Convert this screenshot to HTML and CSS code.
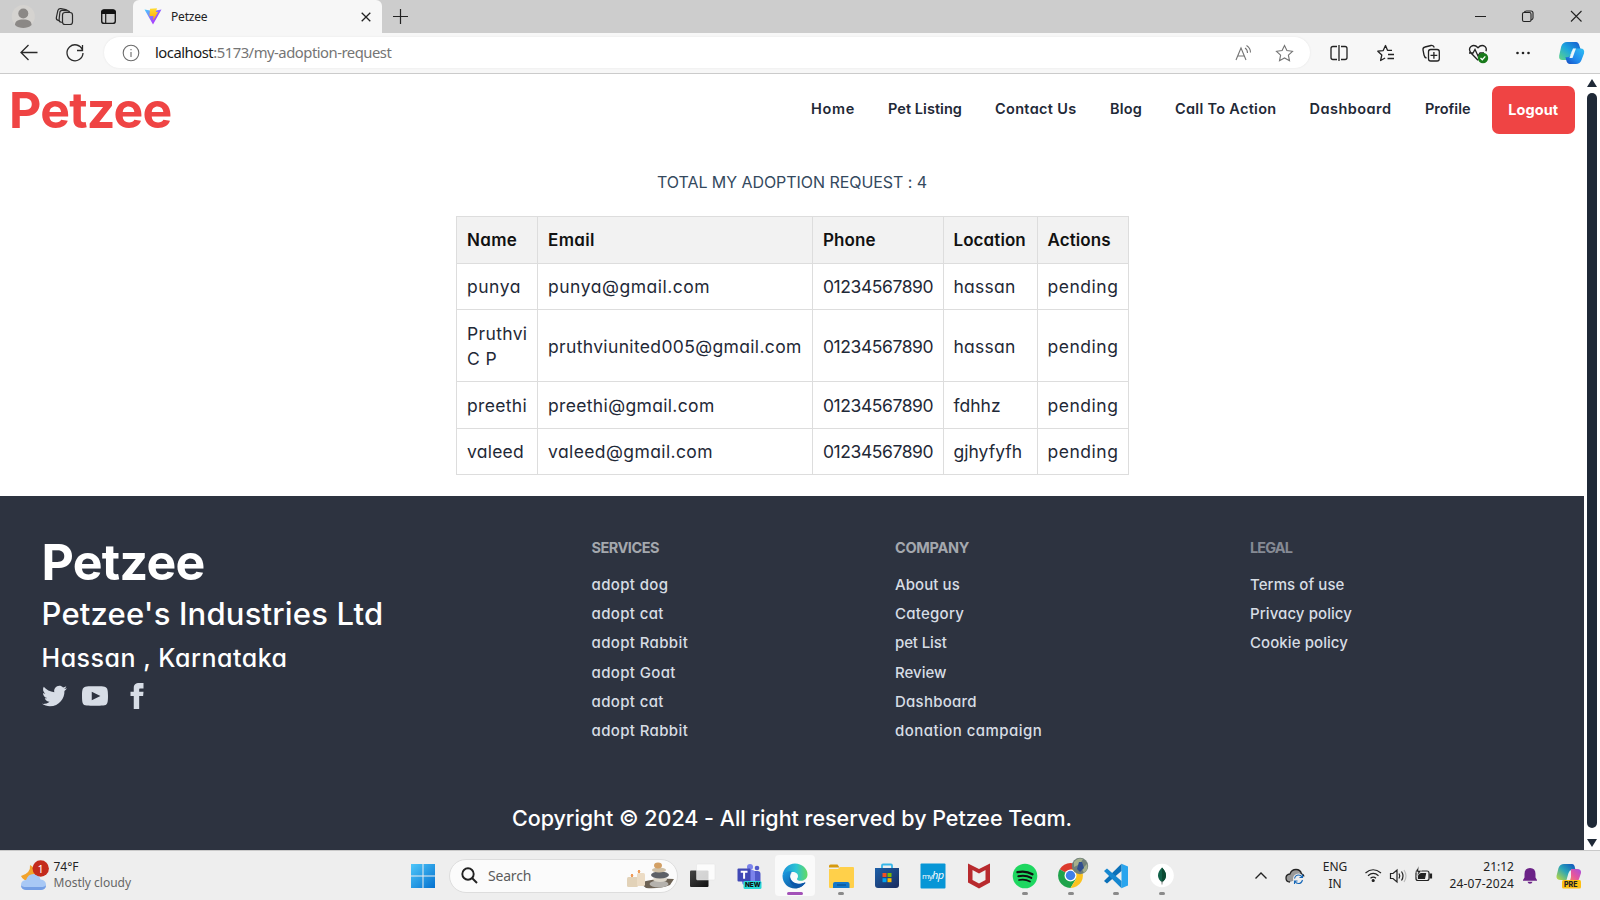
FILE: index.html
```html
<!DOCTYPE html>
<html lang="en">
<head>
<meta charset="utf-8">
<title>Petzee</title>
<link rel="stylesheet" href="styles.css">
</head>
<body>
<div class="tabbar">
  <svg class="tab-tools" width="133" height="33" viewBox="0 0 133 33" fill="none">
    <circle cx="23.300" cy="16.500" r="11.500" fill="#d5d3d0"/><circle cx="23.300" cy="13.500" r="5" fill="#8b8886"/><path d="M15 25c0-4 3-5.600 8.300-5.600s8.300 1.600 8.300 5.600c-2.500 2.200-5 3-8.300 3s-6-.8-8.300-3z" fill="#8b8886"/>
    <g stroke="#2b2b2b" stroke-width="1.200" fill="#cdcdcd"><rect x="57" y="9" width="10" height="12" rx="2.500" transform="rotate(12 62 15)"/><rect x="59.500" y="10.500" width="10" height="12" rx="2.500" transform="rotate(6 64 16)"/><rect x="62.500" y="12.500" width="10" height="12" rx="2.500"/></g>
    <rect x="101.700" y="10" width="13.600" height="13.400" rx="2.500" stroke="#1b1b1b" stroke-width="1.400"/><path d="M101.700 13.500V12q0-2 2-2h9.600q2 0 2 2v1.500z" fill="#111" stroke="#111"/><path d="M105.700 14v9" stroke="#1b1b1b" stroke-width="1.200"/>
  </svg>
  <div class="tab">
    <svg width="18" height="17" viewBox="0 0 18 17"><defs><linearGradient id="vt" x1="0" y1="0" x2="1" y2="1"><stop offset="0" stop-color="#41d1ff"/><stop offset=".6" stop-color="#a04dff"/><stop offset="1" stop-color="#bd34fe"/></linearGradient><linearGradient id="vy" x1="0" y1="0" x2="0" y2="1"><stop offset="0" stop-color="#ffdd35"/><stop offset="1" stop-color="#ffa800"/></linearGradient></defs><path d="M.5 1.500 9 16.500 17.500 1.500 9 3z" fill="url(#vt)"/><path d="M6 .8 13 .2 11.800 4h2.200L9.200 12.500l.3-4.500H5.500z" fill="url(#vy)"/></svg>
    <span class="tab-title">Petzee</span>
    <svg width="10" height="10" viewBox="0 0 10 10" stroke="#222" stroke-width="1.300"><path d="m.7.700 8.600 8.600M9.300.7.700 9.300"/></svg>
  </div>
  <svg class="newtab" width="15" height="15" viewBox="0 0 15 15" stroke="#222" stroke-width="1.200"><path d="M7.500 0v15M0 7.500h15"/></svg>
  <svg class="winbtns" width="110" height="13" viewBox="0 0 110 13" fill="none" stroke="#222" stroke-width="1.100"><path d="M0 6.500h11M96 1l10.500 10.500M106.500 1 96 11.500"/><rect x="47.500" y="2.500" width="8.500" height="9" rx="1.500"/><path d="M49.500 2.500q0-1.500 2-1.500h4.500q2 0 2 2v5q0 1.500-2 2"/></svg>
</div>
<div class="toolbar">
  <svg class="navbtns" width="104" height="40" viewBox="0 0 104 40" fill="none" stroke="#2a2a2a" stroke-width="1.300"><path d="M37.500 19.500H21.500M28.500 12l-7.500 7.500 7.500 7.500"/><path d="M82.500 17a8 8 0 1 0 .5 3M82.500 12v5.500H77"/></svg>
  <div class="address">
    <svg width="18" height="18" viewBox="0 0 18 18" fill="none" stroke="#6b6b6b" stroke-width="1.100"><circle cx="9" cy="9" r="7.800"/><path d="M9 8v5M9 5v1.300"/></svg>
    <span class="url"><b class="host">localhost</b>:5173/my-adoption-request</span>
    <svg width="60" height="20" viewBox="0 0 60 20" fill="none" stroke="#747474" stroke-width="1.100"><path d="m2 17 5-12 5 12M3.800 13h6.400M11 5q2.500 1.500 2.500 5M12.500 2.500q4 2.500 4 7"/><path d="m50.500 2.500 2.400 5.100 5.600.7-4.100 3.900 1.100 5.600-5-2.800-5 2.800 1.100-5.600-4.100-3.900 5.600-.7z"/></svg>
  </div>
  <svg width="290" height="40" viewBox="1310 33 290 40" fill="none" stroke="#222" stroke-width="1.300">
    <path d="M1337 46.500h-4q-2 0-2 2v9q0 2 2 2h4M1341 46.500h4q2 0 2 2v9q0 2-2 2h-4M1339 45v16"/>
    <path d="m1392 50.300h-4.500l-2-4.800-2.300 5.100-5.400.6 4 3.800-1.200 5.500 4.500-2.500M1388 54.500h6M1387.500 58.500h6.500" stroke-linejoin="round"/>
    <path d="M1426.500 58q-2-.5-2.500-3l-1-5q-.3-2.500 2-3l6-1.500q2.500-.5 3.300 2"/><rect x="1428.500" y="49.500" width="10.800" height="11.500" rx="2.200"/><path d="M1433.900 52v6.800M1430.500 55.400h6.800"/>
    <path d="m1478 60.300-7-7.300q-3-4 0-6.500 3.500-2.500 7 1.200 3.500-3.700 7-1.200 2 1.800 1 4.800M1469 53h4l2-3.500 3 6.500 2-3h4"/><circle cx="1483" cy="58" r="5.200" fill="#197a1b" stroke="none"/><path d="m1480.500 58 1.800 1.800 3-3.400" stroke="#fff"/>
    <g fill="#222" stroke="none"><circle cx="1517.500" cy="53" r="1.300"/><circle cx="1523" cy="53" r="1.300"/><circle cx="1528.500" cy="53" r="1.300"/></g>
    <g stroke="none"><path d="M1567 42h9q2.500 0 3.500 4l1 3h-5q-3 0-4 3l-3 8h-6q-4 0-3.300-4.500l2-9q1.500-4.500 5.800-4.500z" fill="url(#cpa)"/><path d="M1576 64h-6q-3 0-3.800-4l-.7-3q4 1 5.500-3l2-5.500h7.500q4.500 0 3.500 5l-2.500 6.500q-1.500 4-5.500 4z" fill="url(#cpb)"/><path d="M1573 48.500h3l-3.500 9.500h-3z" fill="#e9f7fb"/></g>
    <defs><linearGradient id="cpa" x1="1" y1="0" x2="0" y2="1"><stop stop-color="#1657cf"/><stop offset=".5" stop-color="#1ca6df"/><stop offset="1" stop-color="#62d684"/></linearGradient><linearGradient id="cpb" x1="1" y1="0" x2="0" y2="1"><stop stop-color="#30c0f4"/><stop offset=".6" stop-color="#1f87ec"/><stop offset="1" stop-color="#1649bd"/></linearGradient></defs>
  </svg>
</div>
<div class="viewport">
  <div class="page">
    <header class="header">
      <div class="logo">Petzee</div>
      <nav class="nav"><span class="n-home">Home</span><span class="n-pets">Pet Listing</span><span class="n-contact">Contact Us</span><span class="n-blog">Blog</span><span class="n-cta">Call To Action</span><span class="n-dash">Dashboard</span><span>Profile</span></nav>
      <div class="logout">Logout</div>
    </header>
    <h1 class="title">TOTAL MY ADOPTION REQUEST : 4</h1>
    <table class="requests">
      <colgroup><col class="c-name"><col class="c-email"><col class="c-phone"><col class="c-loc"><col class="c-act"></colgroup>
      <thead><tr><th class="loose">Name</th><th class="loose">Email</th><th>Phone</th><th>Location</th><th>Actions</th></tr></thead>
      <tbody>
      <tr><td class="loosest">punya</td><td class="loosest">punya@gmail.com</td><td class="num">01234567890</td><td class="snug">hassan</td><td class="loosest">pending</td></tr>
      <tr class="tall"><td class="loose">Pruthvi<br>C P</td><td class="loose">pruthviunited005@gmail.com</td><td class="num">01234567890</td><td class="snug">hassan</td><td class="loosest">pending</td></tr>
      <tr><td class="loose">preethi</td><td class="loose">preethi@gmail.com</td><td class="num">01234567890</td><td>fdhhz</td><td class="loosest">pending</td></tr>
      <tr><td class="snug">valeed</td><td class="looser">valeed@gmail.com</td><td class="num">01234567890</td><td>gjhyfyfh</td><td class="loosest">pending</td></tr>
      </tbody>
    </table>
    <footer class="footer">
      <div class="columns">
        <div class="brand">
          <div class="brand-name">Petzee</div>
          <div class="brand-co">Petzee's Industries Ltd</div>
          <div class="brand-city">Hassan , Karnataka</div>
          <div class="social">
            <svg width="25" height="26" viewBox="0 0 24 24"><path d="M24 4.557c-.883.392-1.832.656-2.828.775 1.017-.609 1.798-1.574 2.165-2.724-.951.564-2.005.974-3.127 1.195-.897-.957-2.178-1.555-3.594-1.555-3.179 0-5.515 2.966-4.797 6.045-4.091-.205-7.719-2.165-10.148-5.144-1.290 2.213-.669 5.108 1.523 6.574-.806-.026-1.566-.247-2.229-.616-.054 2.281 1.581 4.415 3.949 4.890-.693.188-1.452.232-2.224.084.626 1.956 2.444 3.379 4.600 3.419-2.070 1.623-4.678 2.348-7.290 2.040 2.179 1.397 4.768 2.212 7.548 2.212 9.142 0 14.307-7.721 13.995-14.646.962-.695 1.797-1.562 2.457-2.549z"/></svg>
            <svg width="26" height="26" viewBox="0 0 24 24"><path d="M19.615 3.184c-3.604-.246-11.631-.245-15.230 0-3.897.266-4.356 2.620-4.385 8.816.029 6.185.484 8.549 4.385 8.816 3.600.245 11.626.246 15.230 0 3.897-.266 4.356-2.620 4.385-8.816-.029-6.185-.484-8.549-4.385-8.816zm-10.615 12.816v-8l8 3.993-8 4.007z"/></svg>
            <svg width="26" height="26" viewBox="0 0 24 24"><path d="M9 8h-3v4h3v12h5v-12h3.642l.358-4h-4v-1.667c0-.955.192-1.333 1.115-1.333h2.885v-5h-3.808c-3.596 0-5.192 1.583-5.192 4.615v3.385z"/></svg>
          </div>
        </div>
        <div class="links services"><h2>SERVICES</h2><a>adopt dog</a><a>adopt cat</a><a>adopt Rabbit</a><a>adopt Goat</a><a>adopt cat</a><a>adopt Rabbit</a></div>
        <div class="links company"><h2>COMPANY</h2><a>About us</a><a class="wide1">Category</a><a class="tight">pet List</a><a class="even">Review</a><a class="wide1">Dashboard</a><a class="wide2">donation campaign</a></div>
        <div class="links legal"><h2>LEGAL</h2><a>Terms of use</a><a>Privacy policy</a><a>Cookie policy</a></div>
      </div>
      <p class="copyright">Copyright © 2024 - All right reserved by Petzee Team.</p>
    </footer>
  </div>
  <div class="scrollbar"><i class="up"></i><i class="thumb"></i><i class="down"></i></div>
</div>
<div class="taskbar">
  <div class="weather">
    <svg width="32" height="34" viewBox="18 855 32 34"><path d="M30 861q1 8-9 11 2 5 9 5l6-5-3-9z" fill="#f2a32c"/><path d="M26 886q-5-.5-5-5 0-4.500 5-5 2-6 7.500-6 5.500 0 7 5.500 5.500.5 5.500 5.500 0 4.500-5 5z" fill="#a8c8f5"/><path d="M21 881q0 4.500 5 5h15q5-.5 5-5-1 2-5 2H26q-4 0-5-2z" fill="#749ee4"/><circle cx="40.700" cy="864.500" r="8.200" fill="#c42b1c"/></svg>
    <b class="badge">1</b>
    <div class="wtext"><span>74°F</span><span class="dim">Mostly cloudy</span></div>
  </div>
  <svg class="start" width="26" height="26" viewBox="0 0 26 26"><defs><linearGradient id="w" x1="0" y1="0" x2="1" y2="1"><stop stop-color="#4fc7fa"/><stop offset="1" stop-color="#0471cf"/></linearGradient></defs><path d="M1 1h11.500v11.500H1zM13.500 1H25v11.500H13.500zM1 13.500h11.500V25H1zM13.500 13.500H25V25H13.500z" fill="url(#w)"/></svg>
  <div class="search">
    <svg width="17" height="17" viewBox="0 0 17 17" fill="none" stroke="#222" stroke-width="1.900"><circle cx="7" cy="7" r="5.700"/><path d="m11 11 5 5"/></svg>
    <span class="stext">Search</span>
    <svg width="48" height="27" viewBox="626 863 48 27"><path d="M640 884q14-5 34-4l-4 6q-10 4-24 3z" fill="#6d6254"/><rect x="627" y="878" width="11" height="10" rx="1.500" fill="#e2d2b8"/><rect x="637" y="874" width="8" height="13" rx="1.500" fill="#ecdcc5"/><path d="M632 875q1.500 1.500 0 3-1.500-1.500 0-3zM639 871q1.500 1.500 0 3-1.500-1.500 0-3z" fill="#ef8b3b" stroke="#ef8b3b"/><ellipse cx="659" cy="885" rx="9.500" ry="3.500" fill="#b5b2ad"/><ellipse cx="660" cy="880.500" rx="7" ry="2.500" fill="#ddd7cb"/><ellipse cx="660" cy="876" rx="9" ry="3.500" fill="#5c6067"/><ellipse cx="659" cy="871" rx="7" ry="2.600" fill="#cfc0a7"/><ellipse cx="658" cy="866.500" rx="4" ry="3" fill="#d3a065"/></svg>
  </div>
  <div class="apps">
    <div class="app"><svg viewBox="0 0 26 26"><defs><linearGradient id="tv" x1="0" y1="0" x2="1" y2="1"><stop stop-color="#454545"/><stop offset="1" stop-color="#111"/></linearGradient></defs><rect x="0" y="7.500" width="18.500" height="16.500" rx="1" fill="url(#tv)"/><rect x="6.500" y="1" width="18.500" height="16" rx="1" fill="#fff" fill-opacity=".8" stroke="#e3e3e3" stroke-width=".5"/></svg></div>
    <div class="app teams"><svg viewBox="0 0 26 26"><circle cx="14" cy="4" r="3" fill="#7b83eb"/><circle cx="21" cy="5" r="2.300" fill="#5059c9"/><rect x="16" y="8" width="8.500" height="13" rx="3" fill="#5059c9"/><rect x="6" y="7" width="13" height="15" rx="3" fill="#7b83eb"/><rect x="1.500" y="5.500" width="13" height="13" rx="1" fill="#4048b5"/><path d="M4.700 8.800h6.800M8.100 8.800v7" stroke="#fff" stroke-width="2"/><rect x="7.500" y="18" width="18" height="8" rx="1.500" fill="#28d9d5"/></svg><b class="new">NEW</b></div>
    <div class="app active"><svg viewBox="0 0 26 26"><defs><linearGradient id="e1" x1="0" y1=".3" x2="1" y2=".3"><stop stop-color="#1c91da"/><stop offset=".55" stop-color="#2cc3d4"/><stop offset="1" stop-color="#63db62"/></linearGradient><linearGradient id="e2" x1="0" y1="0" x2="1" y2="1"><stop stop-color="#1b9de2"/><stop offset="1" stop-color="#0b4591"/></linearGradient></defs><path d="M.5 13C1 5.500 6.500.5 13 .5c7 0 12.500 5 12.500 11 0 4-3.200 6.300-6.800 6.300-2.400 0-3.700-.8-3.700-1.800 0-.7 1-1.200 1-3 0-2-2-4-5.500-4-5 0-8.500 1.500-10 4z" fill="url(#e1)"/><path d="M.5 13C2 8.500 6 7.500 10 8.500c-2.500 2-3 8 2 11 4 2.300 8.500 1.300 11.500-.5C21.500 23 17.500 25.500 13 25.500 6 25.500.5 20 .5 13z" fill="url(#e2)"/><path d="M10 9q-3.500 3-1.500 7.500c2 4 8 5.500 13 3.500q1.500-.7 2 0-2.500 3-5.500 4.200C10 25 4 17 10 9z" fill="#0d57a8"/></svg><i class="ind on"></i></div>
    <div class="app"><svg viewBox="0 0 26 26"><path d="M1 3q0-1.500 1.500-1.500h7l2 3H1z" fill="#d69a0f"/><path d="M1 6h9l2-2h13q1 0 1 1v19q0 1-1 1H2q-1 0-1-1z" fill="#ffd04a"/><path d="M5 25v-4q0-2 2-2h12.500q2 0 2 2v4z" fill="#1377c9"/><path d="M9 22h9" stroke="#0d5798" stroke-width="1.500"/></svg><i class="ind"></i></div>
    <div class="app"><svg viewBox="0 0 26 26"><defs><linearGradient id="st" x1="0" y1="0" x2="1" y2="1"><stop stop-color="#1c5fa8"/><stop offset="1" stop-color="#1b2b5d"/></linearGradient></defs><path d="M8 5V2.500Q8 1.500 9 1.500h8q1 0 1 1V5" fill="none" stroke="#37b7e9" stroke-width="1.800"/><path d="M1 5h24v17q0 3-3 3H4q-3 0-3-3z" fill="url(#st)"/><path d="M8.500 10h4v4h-4z" fill="#f25022"/><path d="M13.500 10h4v4h-4z" fill="#7fba00"/><path d="M8.500 15.200h4v4h-4z" fill="#00a4ef"/><path d="M13.500 15.200h4v4h-4z" fill="#ffb900"/></svg></div>
    <div class="app hp"><svg viewBox="0 0 26 26"><rect x=".5" y=".5" width="25" height="25" rx="1" fill="#0796d6"/></svg><b class="hptext">my<em>hp</em></b></div>
    <div class="app"><svg viewBox="0 0 26 26"><path d="M2 .5 13 6 24 .5V19.500L13 25.500 2 19.500z" fill="#b82a2e"/><path d="M6.500 7 13 10.500 19.500 7v10L13 20.500 6.500 17z" fill="#eee"/></svg></div>
    <div class="app"><svg viewBox="0 0 26 26" fill="none" stroke="#111" stroke-linecap="round"><circle cx="13" cy="13" r="12.300" fill="#1ed760" stroke="none"/><path d="M5.500 9.200q8-2 15 2" stroke-width="2.300"/><path d="M6.300 13.300q7-1.700 13 1.600" stroke-width="2"/><path d="M7 17q6-1.300 11 1.500" stroke-width="1.700"/></svg><i class="ind"></i></div>
    <div class="app"><svg class="wide" viewBox="0 0 32 32"><path d="M13.500 18.500 2.700 12.300A12.500 12.500 0 0 1 24.300 12.300z" fill="#dc3a2c"/><path d="M13.500 18.500 2.700 12.300A12.500 12.500 0 0 0 13.500 31l6-10z" fill="#1fa34b"/><path d="M13.500 12.300H24.300A12.500 12.500 0 0 1 13.500 31l5.600-9z" fill="#fcc31e"/><circle cx="13.500" cy="18.500" r="6" fill="#fff"/><circle cx="13.500" cy="18.500" r="4.700" fill="#3f7fe8"/><circle cx="23" cy="9" r="8.200" fill="#70807a"/><path d="M17 5q4-5 9-3l-3 5-6 3zM25 12l5-5q2 5-3 9z" fill="#a5b08c"/><path d="M22 5h3l2 6-4 4-3-3z" fill="#314f8e"/></svg><i class="ind"></i></div>
    <div class="app"><svg viewBox="0 0 26 26"><path d="M18.500.7 25 3.500v19L18.500 25.300z" fill="#2aa5ee"/><path d="M18.500.7V8L4 20.500l-3-2.400z" fill="#0a70b8"/><path d="M18.500 25.300V18L4 5.500 1 8z" fill="#1587d0"/></svg><i class="ind"></i></div>
    <div class="app"><svg viewBox="0 0 26 26"><circle cx="13" cy="12.500" r="11.800" fill="#fff"/><path d="M13 4.500q8 8.500 0 15-8-6.500 0-15z" fill="#116149"/><path d="M13 4.500q8 8.500 0 15z" fill="#0b4a33"/><path d="M13 18v3.500" stroke="#888"/></svg><i class="ind"></i></div>
  </div>
  <svg class="tray-a" width="70" height="30" viewBox="1250 860 70 30" fill="none"><path d="m1255.500 877.500 5.500-5.500 5.500 5.500" stroke="#222" stroke-width="1.400"/><path d="M1290 881q-4 0-4-4 0-3.500 4-4 1.500-4.500 6-4.500 4.500 0 5.500 4.500 2 .5 2.500 2.500" fill="#999" stroke="#222" stroke-width="1.300"/><circle cx="1298.500" cy="878" r="5.500" fill="#eee"/><path d="M1294.500 877.500q1-3.500 4-3.500 2.500 0 3.500 2M1302.500 873.500v3h-3M1302.500 879q-1 3.500-4 3.500-2.500 0-3.500-2M1294.500 883v-3h3" stroke="#1667b7" stroke-width="1.100"/></svg>
  <div class="lang"><span>ENG</span><span>IN</span></div>
  <svg class="tray-b" width="74" height="30" viewBox="1362 860 74 30" fill="none" stroke="#222" stroke-width="1.200"><path d="M1365.500 872q7.500-6.500 15.500 0M1368 874.700q5.300-4.500 10.500 0M1370.500 877.300q2.800-2.300 5.500 0"/><circle cx="1373.200" cy="879.500" r="1" fill="#222"/><path d="M1390.500 872.500h2.500l4-3.500v12l-4-3.500h-2.500zM1399 872.500q1.500 2.500 0 5M1401.500 870.500q3 4.500 0 9"/><path d="M1404 869q4 6 0 12" stroke="#bbb"/><rect x="1416" y="870" width="13" height="9.500" rx="2"/><path d="M1430 873v4h1.500v-4z" fill="#222"/><path d="M1418.500 877.500v-4l3-1h4l-1 5z" fill="#222"/><path d="m1419 865-4 6h3l-1 4.500 4.500-6h-3z" fill="#222" stroke="#eee" stroke-width=".6"/></svg>
  <div class="clock"><span>21:12</span><span class="date">24-07-2024</span></div>
  <svg class="bell" width="16" height="18" viewBox="0 0 16 18" fill="#6b2287"><path d="M8 1q5.500 0 5.500 6v3.500l1.500 2.500v.8H1V13l1.500-2.500V7Q2.500 1 8 1zM5.500 14.800h5q-.5 2-2.500 2t-2.500-2z"/></svg>
  <div class="pre"><svg width="26" height="26" viewBox="0 0 26 26"><defs><linearGradient id="p1" x1="1" y1="0" x2="0" y2="1"><stop stop-color="#0e4fbe"/><stop offset=".5" stop-color="#2aa5b8"/><stop offset="1" stop-color="#c6db37"/></linearGradient><linearGradient id="p2" x1="1" y1="0" x2="0" y2="1"><stop stop-color="#a54fe0"/><stop offset=".5" stop-color="#e4559f"/><stop offset="1" stop-color="#f98a57"/></linearGradient></defs><path d="M8 1h8q2.500 0 3 4l.5 2h-4q-2 0-3 3l-2 7H5q-5 0-4.500-4l2-8Q4 1 8 1z" fill="url(#p1)"/><path d="M15 6h6q4.500 0 4 4l-2 6q-1 3-4 3h-7q2 0 3-5z" fill="url(#p2)"/><rect x="6" y="17" width="19" height="8.500" rx="1.500" fill="#fdc014"/></svg><b class="pretext">PRE</b></div>
</div>
</body>
</html>
```
FILE: styles.css
```css
* { box-sizing: border-box; }
body { margin: 0; width: 1600px; height: 900px; overflow: hidden; font-family: "Noto Sans", "Open Sans", sans-serif; background: #fff; display: flex; flex-direction: column; }
svg { display: block; flex: none; }

/* browser chrome */
.tabbar { height: 33px; background: #cdcdcd; display: flex; align-items: center; }
.tab { width: 249px; height: 33px; background: #f7f7f7; border-radius: 6px 6px 0 0; display: flex; align-items: center; padding: 0 11px; }
.tab-title { flex: 1; margin-left: 9px; font-size: 12px; letter-spacing: -.2px; color: #222; }
.newtab { margin-left: 11px; }
.winbtns { margin-left: auto; margin-right: 15px; }

.toolbar { height: 41px; background: #f7f7f7; border-bottom: 1px solid #cbcbcb; display: flex; }
.address { width: 1206px; height: 31px; margin-top: 4px; border-radius: 16px; background: #fff; box-shadow: 0 0 2px #e2e2e2; display: flex; align-items: center; padding: 0 16px 0 18px; }
.url { flex: 1; margin-left: 15px; padding-bottom: 1px; font-size: 14.800px; letter-spacing: -.480px; color: #757575; }
.host { font-weight: 400; color: #1a1a1a; }

/* page */
.viewport { height: 776px; display: flex; }
.page { width: 1584px; display: flex; flex-direction: column; font-family: Inter, "Open Sans", sans-serif; font-feature-settings: "cv11"; }
.header { height: 72px; display: flex; align-items: center; }
.logo { width: 801px; padding-left: 9px; font-size: 50px; font-weight: 700; line-height: 50px; letter-spacing: -.8px; color: #ef4444; white-space: nowrap; }
.nav { display: grid; grid-template-columns: 77px 107px 115px 65px 134.500px 115.500px 66.500px; margin-left: 10px; padding-bottom: 3px; font-size: 14.500px; font-weight: 600; color: #1f2937; white-space: nowrap; }
.n-home { letter-spacing: .680px; }
.n-pets { letter-spacing: .050px; }
.n-contact { letter-spacing: .320px; }
.n-blog { letter-spacing: .180px; }
.n-cta { letter-spacing: .300px; }
.n-dash { letter-spacing: .470px; }
.logout { width: 83.500px; height: 48px; padding-bottom: 2px; border-radius: 7px; background: #ef4444; color: #fff; font-size: 14.500px; font-weight: 700; letter-spacing: .09px; display: flex; align-items: center; justify-content: center; }
.title { margin: 25px 0 23px; height: 22px; line-height: 22px; text-align: center; font-size: 16px; font-weight: 400; letter-spacing: -.057px; color: #34495e; }
.requests { width: 672px; margin-left: 456px; table-layout: fixed; border-collapse: collapse; font-size: 17.500px; line-height: 25px; color: #1f2937; }
.c-name { width: 81px; } .c-email { width: 275px; } .c-phone { width: 130.500px; } .c-loc { width: 94px; } .c-act { width: 91.500px; }
.requests th, .requests td { border: 1px solid #ddd; padding: 1px 0 0 10px; height: 46.500px; text-align: left; white-space: nowrap; }
.requests .tall td { height: 72px; }
.requests th { background: #f2f2f2; color: #111; font-size: 17px; font-weight: 600; letter-spacing: .080px; }
.requests .loosest { letter-spacing: .520px; }
.requests .looser { letter-spacing: .400px; }
.requests .loose { letter-spacing: .345px; }
.requests .snug { letter-spacing: .230px; }
.requests .num { letter-spacing: -.430px; }

/* footer */
.footer { flex: 1; margin-top: 21px; background: #2d3340; color: #fff; }
.columns { display: flex; height: 300px; }
.brand { width: 591px; padding: 39px 0 0 41.500px; white-space: nowrap; }
.brand-name { font-size: 50px; font-weight: 700; line-height: 55px; letter-spacing: -.7px; }
.brand-co { font-size: 31px; font-weight: 500; line-height: 47px; letter-spacing: .190px; }
.brand-city { font-size: 25px; font-weight: 500; line-height: 42px; letter-spacing: .510px; }
.social { display: flex; gap: 15.500px; margin-top: 4px; fill: #d7dde6; }
.links { padding-top: 41px; font-size: 15px; font-weight: 500; color: #d7dde4; }
.links h2 { margin: 0 0 11px; font-size: 14.500px; font-weight: 700; line-height: 22px; color: #a4a8ae; }
.links a { display: block; line-height: 29.200px; height: 29.200px; letter-spacing: .080px; }
.services { width: 304px; padding-left: .5px; }
.services h2 { letter-spacing: -.5px; }
.services a { letter-spacing: .370px; }
.company { width: 355px; }
.company h2 { letter-spacing: -.3px; }
.company .wide1 { letter-spacing: .250px; }
.company .wide2 { letter-spacing: .450px; }
.company .tight { letter-spacing: -.120px; }
.company .even { letter-spacing: 0; }
.legal h2 { letter-spacing: -.890px; color: #858a94; }
.copyright { margin: 8px 0 0; text-align: center; font-size: 21.500px; font-weight: 500; line-height: 28px; letter-spacing: -.028px; }

.scrollbar { width: 16px; display: flex; flex-direction: column; align-items: center; padding: 5px 0 3px; background: #fff; }
.up, .down { border: 5px solid transparent; border-top: 0; border-bottom: 8px solid #1f2937; }
.down { border-bottom: 0; border-top: 8px solid #1f2937; }
.thumb { flex: 1; width: 10px; border-radius: 5px; background: #1f2937; margin: 6px 0 11px; }

/* taskbar */
.taskbar { height: 50px; background: #eee; border-top: 1px solid #c9c9c9; display: flex; align-items: center; font-size: 12px; color: #222; }
.weather { position: relative; width: 410px; display: flex; padding-left: 18px; }
.badge { position: absolute; left: 37.500px; top: 1px; font-size: 11px; font-weight: 400; line-height: 17px; color: #fff; }
.wtext { display: flex; flex-direction: column; align-items: flex-start; margin-left: 3.500px; line-height: 16.500px; }
.dim { color: #666; }
.search { width: 229px; height: 34px; margin-left: 13px; border-radius: 17px; background: #fbfbfb; border: 1px solid #ddd; display: flex; align-items: center; padding: 0 3px 0 11px; }
.stext { flex: 1; margin-left: 10px; font-size: 14px; letter-spacing: -.2px; color: #5c5c5c; }
.apps { display: flex; width: 505px; margin-left: 2.500px; }
.app { position: relative; width: 45.880px; height: 50px; display: flex; align-items: center; justify-content: center; }
.app svg { width: 26px; height: 26px; }
.app svg.wide { width: 32px; height: 32px; margin: -6px 0 0 6px; }
.active::before { content: ""; position: absolute; left: 3px; top: 4px; width: 40px; height: 41px; border-radius: 4px; background: #fafafa; }
.active svg { position: relative; }
.ind { position: absolute; left: 20px; top: 41.500px; width: 6px; height: 3px; border-radius: 2px; background: #8a8a8a; }
.on { left: 15px; width: 16px; background: #a352b8; }
.new { position: absolute; left: 18.500px; top: 30px; font: 800 6.500px/8px Inter, sans-serif; color: #111; }
.hptext { position: absolute; left: 12px; top: 17px; font: 500 8px/14px "Open Sans", sans-serif; letter-spacing: -.6px; color: #fff; }
.hptext em { font-size: 11px; }
.tray-a { margin-left: 64.500px; }
.lang { width: 30px; display: flex; flex-direction: column; align-items: center; line-height: 16.500px; }
.tray-b { margin-left: 12px; }
.clock { width: 78px; display: flex; flex-direction: column; align-items: flex-end; line-height: 16.500px; }
.date { letter-spacing: .190px; }
.bell { margin-left: 7.500px; }
.pre { position: relative; margin-left: 18px; }
.pretext { position: absolute; left: 8.500px; top: 17px; font: 800 7px/9px Inter, sans-serif; color: #222; }
```
